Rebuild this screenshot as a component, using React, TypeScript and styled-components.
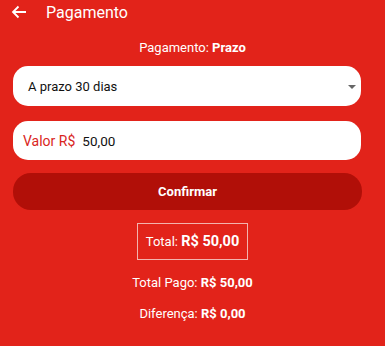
import React from "react";
import styled, { createGlobalStyle } from "styled-components";

const GlobalStyle = createGlobalStyle`
  body {
    margin: 0;
    background: #e2231a;
    font-family: Roboto, "Liberation Sans", sans-serif;
  }
`;

const Page = styled.div`
  width: 385px;
  height: 346px;
  background: #e2231a;
  color: #fff;
  overflow: hidden;
  display: flex;
  flex-direction: column;
`;

const Header = styled.div`
  height: 24px;
  display: flex;
  align-items: center;
  padding-left: 11px;
  gap: 19px;
`;

const Title = styled.div`
  font-size: 16px;
  color: #fff;
`;

const Content = styled.div`
  padding: 0 13px 0 13px;
  display: flex;
  flex-direction: column;
  align-items: stretch;
`;

const Subtitle = styled.div`
  text-align: center;
  font-size: 13px;
  margin-top: 16px;
  line-height: 16px;
`;

const Field = styled.div`
  height: 40px;
  width: 348px;
  background: #fff;
  border-radius: 15px;
  display: flex;
  align-items: center;
  box-sizing: border-box;
  position: relative;
  font-size: 13.5px;
  color: #111;
`;

const SelectField = styled(Field)`
  margin-top: 10px;
  padding-left: 15px;
  font-size: 13px;
`;

const InputField = styled(Field)`
  margin-top: 15px;
  height: 39px;
  padding-left: 10px;
`;

const Caret = styled.div`
  position: absolute;
  right: 5px;
  top: 19px;
  width: 0;
  height: 0;
  border-left: 4px solid transparent;
  border-right: 4px solid transparent;
  border-top: 4px solid #666;
`;

const Label = styled.span`
  color: #d9251d;
  font-size: 14px;
  margin-right: 7px;
`;

const Button = styled.div`
  margin-top: 13px;
  height: 37px;
  width: 349px;
  border-radius: 18px;
  background: #b10f08;
  display: flex;
  align-items: center;
  justify-content: center;
  font-weight: 700;
  font-size: 13px;
  color: #fff;
`;

const TotalBox = styled.div`
  align-self: center;
  margin-top: 13px;
  border: 1px solid #f3b3ae;
  height: 37px;
  box-sizing: border-box;
  padding: 0 8px;
  display: flex;
  align-items: center;
  font-size: 13px;
  b {
    font-size: 14.5px;
  }
`;

const Line = styled.div`
  text-align: center;
  font-size: 13px;
  line-height: 16px;
  margin-top: ${(p: { $gap: number }) => p.$gap}px;
`;

export default function App() {
  return (
    <Page>
      <GlobalStyle />
      <Header>
        <svg width="16" height="14" viewBox="0 0 16 14">
          <path d="M15 7H2M7.5 1.5L2 7l5.5 5.5" stroke="#fff" strokeWidth="1.8" fill="none" />
        </svg>
        <Title>Pagamento</Title>
      </Header>
      <Content>
        <Subtitle>
          Pagamento: <b>Prazo</b>
        </Subtitle>
        <SelectField>
          A prazo 30 dias
          <Caret />
        </SelectField>
        <InputField>
          <Label>Valor R$</Label>
          50,00
        </InputField>
        <Button>Confirmar</Button>
        <TotalBox>
          Total:&nbsp;<b>R$ 50,00</b>
        </TotalBox>
        <Line $gap={15}>
          Total Pago: <b>R$ 50,00</b>
        </Line>
        <Line $gap={15}>
          Diferença: <b>R$ 0,00</b>
        </Line>
      </Content>
    </Page>
  );
}
